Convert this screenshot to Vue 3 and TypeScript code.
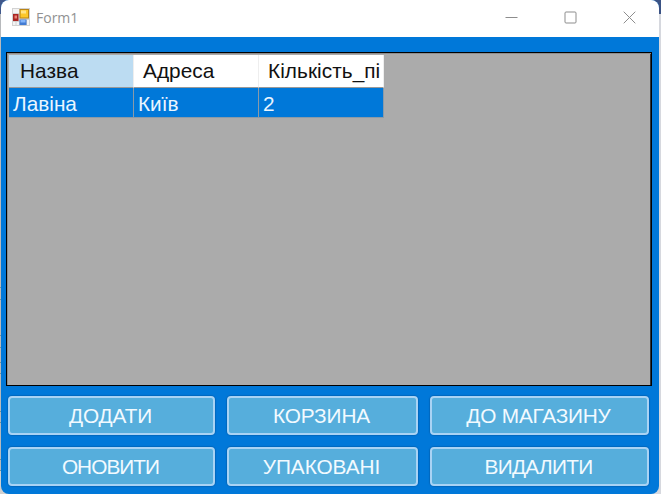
<script setup lang="ts">
interface Action {
  label: string
  spacing: number
}

const columns: string[] = ['Назва', 'Адреса', 'Кількість_пі']
const row: string[] = ['Лавіна', 'Київ', '2']
const actions: Action[] = [
  { label: 'ДОДАТИ', spacing: -0.1 },
  { label: 'КОРЗИНА', spacing: -0.1 },
  { label: 'ДО МАГАЗИНУ', spacing: -0.2 },
  { label: 'ОНОВИТИ', spacing: -0.95 },
  { label: 'УПАКОВАНІ', spacing: -0.05 },
  { label: 'ВИДАЛИТИ', spacing: -0.7 },
]
</script>

<template>
  <div class="desktop">
    <div class="window">
      <header class="titlebar">
        <svg class="app-icon" width="18" height="18" viewBox="0 0 18 18">
          <rect width="18" height="18" fill="#d2d2d2" />
          <path d="M1 1h6v4H1zM1 14h2.5v3H1zM4.5 14H7v3H4.5zM15 12h2v5h-2z" fill="#f4f4f4" />
          <rect x="7.5" y="1" width="9.5" height="9.5" fill="#b98416" />
          <rect x="8.5" y="2" width="7.5" height="7.5" fill="#fcc729" />
          <rect x="9" y="2.5" width="5" height="3" fill="#ffe385" />
          <rect x="1" y="6" width="5.5" height="7" fill="#a92522" />
          <rect x="2.5" y="7.5" width="2.5" height="3" fill="#ea8275" />
          <rect x="7.5" y="11.5" width="7" height="5.5" fill="#427bd3" />
          <rect x="8.5" y="12" width="5" height="2.5" fill="#82b4fa" />
        </svg>
        <span class="title">Form1</span>
        <div class="controls">
          <svg width="13" height="13" viewBox="0 0 13 13"><path d="M.5 6.5h12" /></svg>
          <svg width="13" height="13" viewBox="0 0 13 13"><rect x="1" y="1" width="11" height="11" rx="1" /></svg>
          <svg width="13" height="13" viewBox="0 0 13 13"><path d="M.7.7l11.6 11.6M12.3.7L.7 12.3" /></svg>
        </div>
      </header>
      <main class="client">
        <div class="grid">
          <div class="line head">
            <div v-for="(c, i) in columns" :key="c" class="th" :class="{ active: i === 0 }">{{ c }}</div>
          </div>
          <div class="line">
            <div v-for="c in row" :key="c" class="td">{{ c }}</div>
          </div>
        </div>
        <div class="actions">
          <button v-for="a in actions" :key="a.label" type="button" :style="{ letterSpacing: a.spacing + 'px' }">
            {{ a.label }}
          </button>
        </div>
      </main>
    </div>
  </div>
</template>

<style>
body {
  margin: 0;
  overflow: hidden;
}
</style>

<style scoped>
* {
  box-sizing: border-box;
}
.desktop {
  width: 661px;
  height: 494px;
  padding: 0 1px;
  background:
    linear-gradient(#3a5284, #3a5284) right top / 8px 14px no-repeat,
    linear-gradient(#40588b, #40588b) left top / 8px 14px no-repeat,
    linear-gradient(#d6d8de, #d6d8de) right top / 8px 100% no-repeat,
    linear-gradient(#b7b9bc 0 287px, #6f9298 287px 288px, #b7b9bc 288px 299px, #6f9298 299px 300px, #b7b9bc 300px 335px, #6f9298 335px 336px, #b7b9bc 336px 347px, #6f9298 347px 348px, #b7b9bc 348px 362px, #6f9298 362px 363px, #b7b9bc 363px 373px, #6f9298 373px 374px, #b7b9bc 374px 411px, #6f9298 411px 412px, #b7b9bc 412px 422px, #6f9298 422px 423px, #b7b9bc 423px 459px, #6f9298 459px 460px, #b7b9bc 460px 470px, #6f9298 470px 471px, #d0d0d0 471px);
  font-family: "Liberation Sans", Arial, sans-serif;
}
.window {
  width: 658px;
  height: 494px;
  border-radius: 8px;
  overflow: hidden;
  background: #0078d9;
  display: flex;
  flex-direction: column;
}
.titlebar {
  height: 37px;
  flex: none;
  background: #fff;
  display: flex;
  align-items: center;
  padding: 0 23px 1px 11px;
}
.app-icon {
  margin-top: -2px;
}
.title {
  margin: 0 0 0 6px;
  font: 14px/20px "Open Sans", sans-serif;
  color: #929292;
}
.controls {
  margin: -1px 0 0 auto;
  display: flex;
  gap: 46px;
}
.controls svg {
  fill: none;
  stroke: #8d8d8d;
  stroke-width: 1;
}
.client {
  padding: 15px 9px 0 5px;
}
.grid {
  width: 646px;
  height: 334px;
  border: 1px solid #000;
  background: #ababab;
  padding: 2px 0 0 2px;
  box-shadow: inset 1px 1px #8e8e8e, inset -1px 0 #303438;
}
.line {
  display: flex;
  height: 30px;
  width: 376px;
}
.line.head {
  height: 33px;
}
.th,
.td {
  width: 125px;
  flex: none;
  white-space: nowrap;
  overflow: hidden;
  font-size: 20.8px;
  line-height: 30px;
}
.th {
  background: #fff;
  color: #111;
  padding-left: 9px;
  line-height: 32px;
  letter-spacing: 0.05px;
  border-right: 1px solid #eee;
  border-bottom: 1px solid #999;
}
.th.active {
  background: #bcdcf2;
  padding-left: 11px;
}
.td {
  background: #0078d9;
  color: #eaf5ff;
  padding-left: 4px;
  line-height: 31px;
  border-right: 1px solid #8a9aa8;
  border-bottom: 1px solid #8a9aa8;
}
.actions {
  display: grid;
  grid-template-columns: 207px 191px 219px;
  grid-auto-rows: 39px;
  column-gap: 12px;
  row-gap: 12px;
  margin: 10px 0 0 2px;
}
button {
  padding: 0 2px 0 0;
  border: 2px solid #a9d3f4;
  border-radius: 4px;
  background: #56aedc;
  box-shadow: 0 0 1px 1px #0068be;
  color: #f2faff;
  font: 20.8px/34px "Liberation Sans", Arial, sans-serif;
  text-align: center;
  white-space: nowrap;
}
</style>
